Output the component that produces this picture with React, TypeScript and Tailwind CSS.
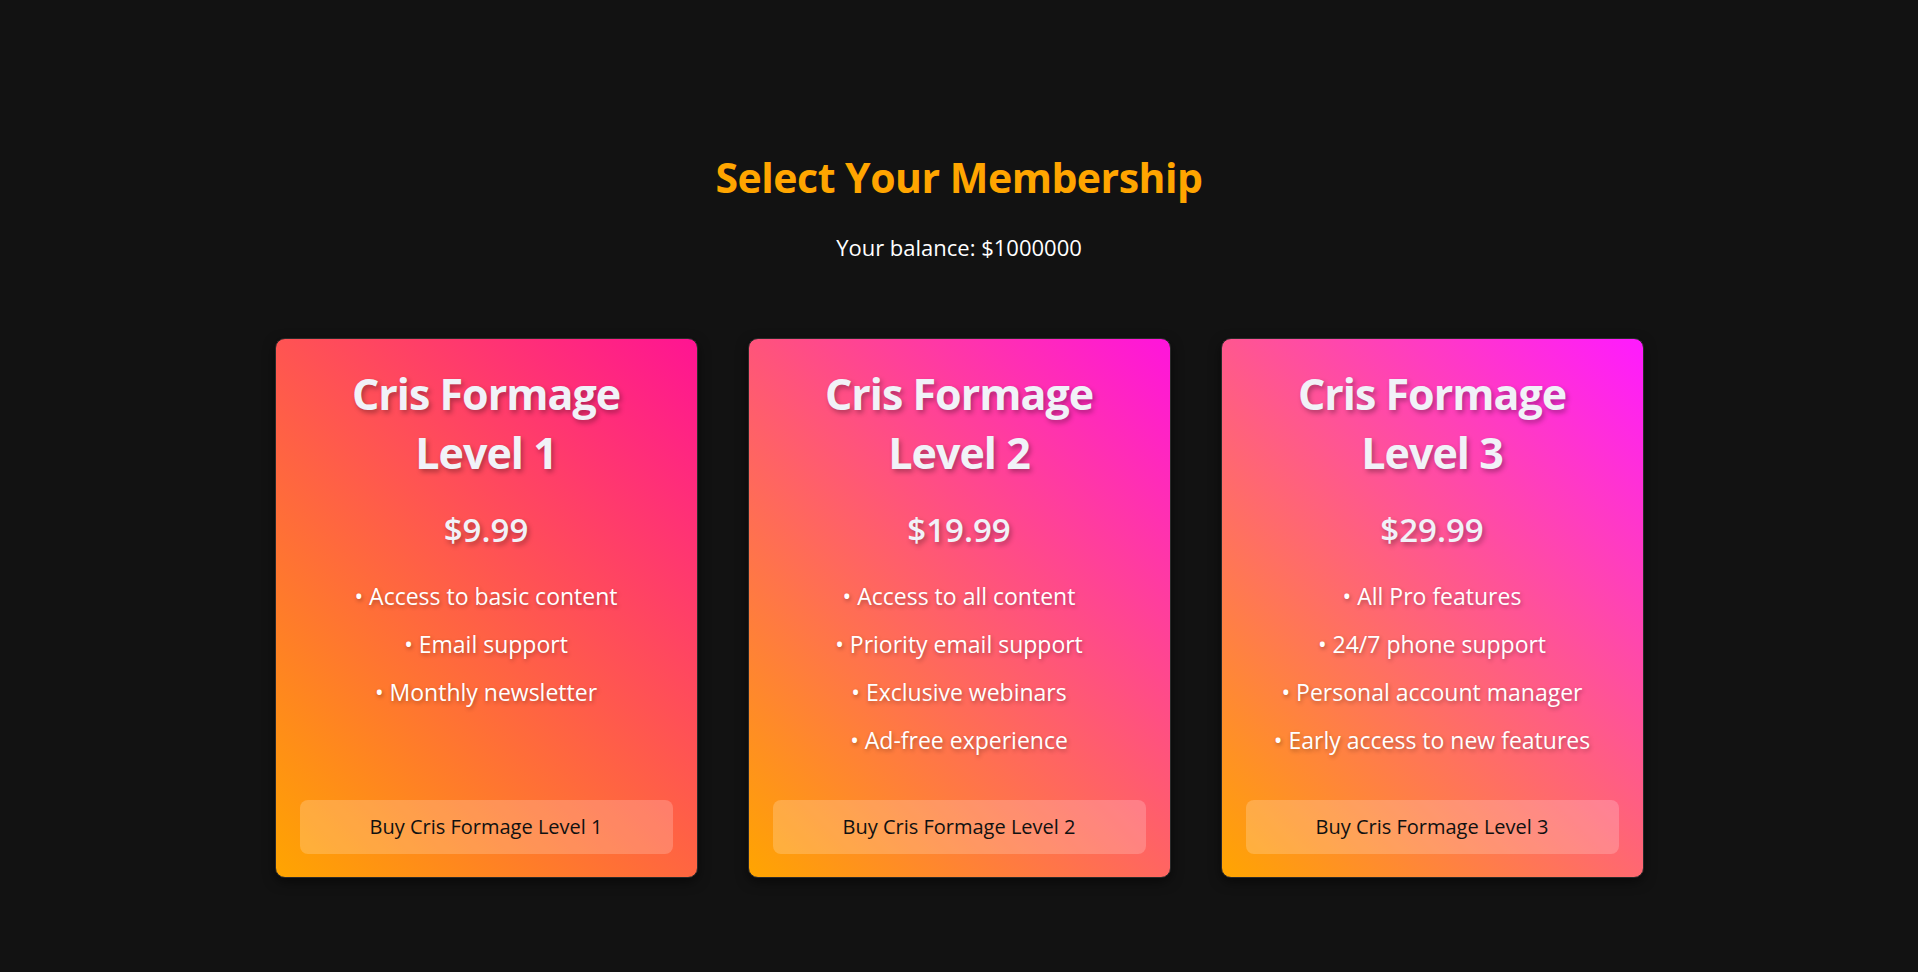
const plans = [
  {
    level: 1,
    price: "$9.99",
    features: ["Access to basic content", "Email support", "Monthly newsletter"],
    bg: "bg-[linear-gradient(45deg,#ffa500,#ff1493)]",
  },
  {
    level: 2,
    price: "$19.99",
    features: [
      "Access to all content",
      "Priority email support",
      "Exclusive webinars",
      "Ad-free experience",
    ],
    bg: "bg-[linear-gradient(45deg,#ffa500,#ff14dc)]",
  },
  {
    level: 3,
    price: "$29.99",
    features: [
      "All Pro features",
      "24/7 phone support",
      "Personal account manager",
      "Early access to new features",
    ],
    bg: "bg-[linear-gradient(45deg,#ffa500,#ff1aff)]",
  },
];

const App = () => {
  return (
    <main className="min-h-screen bg-[#121212] font-['Open_Sans',sans-serif] flex flex-col items-center pt-[153px] pb-16">
      <h1 className="text-[41px] leading-[48px] font-bold text-[#ffa500] tracking-[-0.5px]">
        Select Your Membership
      </h1>
      <p className="mt-[31px] text-[22px] leading-[30px] text-white">
        Your balance: $1000000
      </p>

      <div className="mt-[76px] flex gap-[50px]">
        {plans.map((plan) => (
          <div
            key={plan.level}
            className={`w-[423px] h-[540px] flex flex-col items-center rounded-[10px] border border-[#2a2a2a] pt-[25px] px-6 pb-[23px] shadow-[0_4px_12px_rgba(0,0,0,0.5)] ${plan.bg}`}
          >
            <h2 className="text-[43px] leading-[59px] font-bold text-[#f1f2f8] text-center [text-shadow:2px_3px_5px_rgba(0,0,0,0.3)] tracking-[-1px]">
              Cris Formage
              <br />
              Level {plan.level}
            </h2>
            <div className="mt-[28px] text-[33px] leading-[40px] font-semibold text-[#f1f2f8] [text-shadow:2px_3px_5px_rgba(0,0,0,0.3)]">
              {plan.price}
            </div>
            <ul className="mt-[30px] flex flex-col gap-[16px] text-[23px] leading-[32px] text-white text-center [text-shadow:1px_2px_4px_rgba(0,0,0,0.3)]">
              {plan.features.map((f) => (
                <li key={f}>• {f}</li>
              ))}
            </ul>
            <button className="mt-auto w-full h-[54px] rounded-lg bg-white/20 text-[20px] text-[#111]">
              Buy Cris Formage Level {plan.level}
            </button>
          </div>
        ))}
      </div>
    </main>
  );
};

export default App;
